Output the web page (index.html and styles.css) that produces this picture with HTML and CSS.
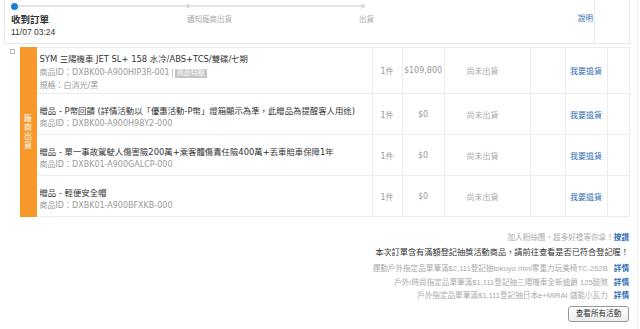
FILE: index.html
```html
<!DOCTYPE html>
<html lang="zh-Hant">
<head>
    <meta charset="UTF-8">
    <meta name="viewport" content="width=device-width, initial-scale=1.0">
    <title>訂單明細</title>
    <link rel="stylesheet" href="styles.css">
</head>
<body>
<div class="page">
    <div class="progress">
        <div class="progress-main">
            <div class="track">
                <span class="dot dot-done"></span>
                <span class="dot dot-mid"></span>
                <span class="dot dot-end"></span>
            </div>
            <div class="steps">
                <div class="step step-done">
                    <b>收到訂單</b>
                    <span>11/07 03:24</span>
                </div>
                <div class="step step-mid">通知廠商出貨</div>
                <div class="step step-last">出貨</div>
                <a href="#" class="help">說明</a>
            </div>
        </div>
        <div class="progress-side"></div>
    </div>

    <table class="items">
        <colgroup>
            <col style="width:16px">
            <col style="width:16px">
            <col style="width:336px">
            <col style="width:30px">
            <col style="width:42px">
            <col style="width:86px">
            <col style="width:35px">
            <col style="width:42px">
            <col style="width:22px">
        </colgroup>
        <tr>
            <td class="check" rowspan="4"><span class="checkbox"></span></td>
            <td class="vendor" rowspan="4"><span>廠商出貨</span></td>
            <td class="product product-main">
                <div class="name">SYM 三陽機車 JET SL+ 158 水冷/ABS+TCS/雙碟/七期</div>
                <div class="sku">商品ID：DXBK00-A900HIP3R-001<span class="sep"></span><span class="badge">商品特點</span></div>
                <div class="spec">規格：白消光/黑</div>
            </td>
            <td>1件</td>
            <td>$109,800</td>
            <td class="status">尚未出貨</td>
            <td></td>
            <td><a href="#">我要退貨</a></td>
            <td></td>
        </tr>
        <tr>
            <td class="product">
                <div class="name">贈品 - P幣回饋 (詳情活動以「優惠活動-P幣」燈箱顯示為準，此贈品為提醒客人用途)</div>
                <div class="sku">商品ID：DXBK00-A900H98Y2-000</div>
            </td>
            <td>1件</td>
            <td>$0</td>
            <td class="status">尚未出貨</td>
            <td></td>
            <td><a href="#">我要退貨</a></td>
            <td></td>
        </tr>
        <tr>
            <td class="product">
                <div class="name">贈品 - 單一事故駕駛人傷害險200萬+乘客體傷責任險400萬+丟車賠車保障1年</div>
                <div class="sku">商品ID：DXBK01-A900GALCP-000</div>
            </td>
            <td>1件</td>
            <td>$0</td>
            <td class="status">尚未出貨</td>
            <td></td>
            <td><a href="#">我要退貨</a></td>
            <td></td>
        </tr>
        <tr>
            <td class="product">
                <div class="name">贈品 - 輕便安全帽</div>
                <div class="sku">商品ID：DXBK01-A900BFXKB-000</div>
            </td>
            <td>1件</td>
            <td>$0</td>
            <td class="status">尚未出貨</td>
            <td></td>
            <td><a href="#">我要退貨</a></td>
            <td></td>
        </tr>
    </table>

    <div class="promo">
        <div class="fan">加入粉絲團，超多好禮等你拿！<a href="#">按讚</a></div>
        <div class="notice">本次訂單含有滿額登記抽獎活動商品，請前往查看是否已符合登記喔！</div>
        <ul class="promo-list">
            <li>運動戶外指定品單筆滿$2,111登記抽tokuyo mini零重力玩美椅TC-262B<a href="#">詳情</a></li>
            <li>戶外/時尚指定品單筆滿$1,111登記抽三陽機車全新迪爵 125鼓煞<a href="#">詳情</a></li>
            <li>戶外指定品單筆滿$1,111登記抽日本e+MIRAI 儲能小瓦力<a href="#">詳情</a></li>
        </ul>
        <a href="#" class="all-btn">查看所有活動</a>
    </div>
</div>
</body>
</html>
```

FILE: styles.css
```css
* {
    box-sizing: border-box;
}
body {
    margin: 0;
    font-family: "Liberation Sans", "Noto Sans CJK TC", sans-serif;
    color: #333;
    background-color: #ffffff;
}
a {
    text-decoration: none;
    color: #2d6cb5;
}
.page {
    width: 638px;
    min-height: 100vh;
    border-right: 1px solid #f2f2f2;
}

/* progress */
.progress {
    display: flex;
    width: 626px;
    height: 44px;
    margin-left: 4px;
    border: 1px solid #e8e8e8;
    border-top: none;
}
.progress-main {
    flex: 1;
}
.progress-side {
    width: 35px;
    border-left: 1px solid #e8e8e8;
}
.track {
    position: relative;
    width: 349px;
    height: 2px;
    margin: 5px 0 0 9px;
    background-color: #e4e4e4;
}
.dot {
    position: absolute;
    border-radius: 50%;
}
.dot-done {
    left: -3px;
    top: -2.5px;
    width: 7px;
    height: 7px;
    background-color: #1e7fd8;
}
.dot-mid {
    left: 172px;
    top: -1px;
    width: 4px;
    height: 4px;
    background-color: #d6d6d6;
}
.dot-end {
    right: -2px;
    top: -1px;
    width: 4px;
    height: 4px;
    background-color: #d6d6d6;
}
.steps {
    display: flex;
    margin-top: 7px;
    font-size: 7.5px;
    line-height: 12px;
    color: #aaa;
}
.step-done {
    width: 182px;
    padding-left: 6px;
    color: #333;
}
.step-done b {
    display: block;
    font-size: 9.5px;
}
.step-done span {
    display: block;
    font-size: 8.5px;
    line-height: 13px;
}
.step-mid {
    width: 172px;
}
.step-last {
    flex: 1;
}
.help {
    margin-top: -1px;
    padding-right: 1px;
}

/* items */
.items {
    width: 625px;
    margin: 3px 0 0 4px;
    border-collapse: collapse;
    table-layout: fixed;
    font-family: "DejaVu Sans", "Noto Sans CJK TC", sans-serif;
}
.items td {
    padding: 0;
    border: 1px solid #ececec;
    text-align: center;
    vertical-align: middle;
    font-size: 8px;
    color: #999;
}
.items td.check {
    border: none;
    vertical-align: top;
}
.checkbox {
    display: block;
    width: 5px;
    height: 5px;
    margin: 1px 0 0 6px;
    border: 1px solid #bbb;
}
.items td.vendor {
    border: 1px solid #f8982a;
    background-color: #f8982a;
    color: #fff;
}
.vendor span {
    display: block;
    width: 8px;
    margin: 0 auto;
    font-size: 8px;
    line-height: 9px;
}
.items td.product {
    padding: 11px 3px 4px;
    text-align: left;
}
.items td.product-main {
    padding: 5px 3px 1px;
}
.name {
    font-size: 8.4px;
    line-height: 13px;
    color: #333;
    white-space: nowrap;
}
.sku {
    display: flex;
    align-items: center;
    line-height: 12px;
}
.product-main .sku {
    line-height: 14px;
}
.sep {
    width: 1px;
    height: 9px;
    margin: 0 2px;
    background-color: #ccc;
}
.badge {
    padding: 0 2px;
    font-size: 7px;
    line-height: 9px;
    color: #fff;
    background-color: #c4c4c4;
}
.spec {
    line-height: 12px;
}
.items td.status {
    padding-right: 9px;
    color: #aaa;
}

/* promo */
.promo {
    width: 625px;
    margin-left: 4px;
    padding-top: 14px;
    text-align: right;
    font-size: 7.6px;
    color: #aaa;
}
.fan {
    line-height: 14px;
}
.fan a {
    font-weight: bold;
}
.notice {
    font-size: 8.2px;
    line-height: 15px;
    color: #333;
}
.promo-list {
    list-style: none;
    margin: 2px 0 0;
    padding: 0;
    line-height: 13.5px;
}
.promo-list a {
    margin-left: 6px;
    font-weight: bold;
}
.all-btn {
    display: inline-block;
    width: 61px;
    height: 16px;
    margin-top: 3px;
    border: 1px solid #999;
    border-radius: 3px;
    background: linear-gradient(#fff, #ececec);
    font-size: 7.6px;
    line-height: 14px;
    text-align: center;
    color: #333;
}
```
